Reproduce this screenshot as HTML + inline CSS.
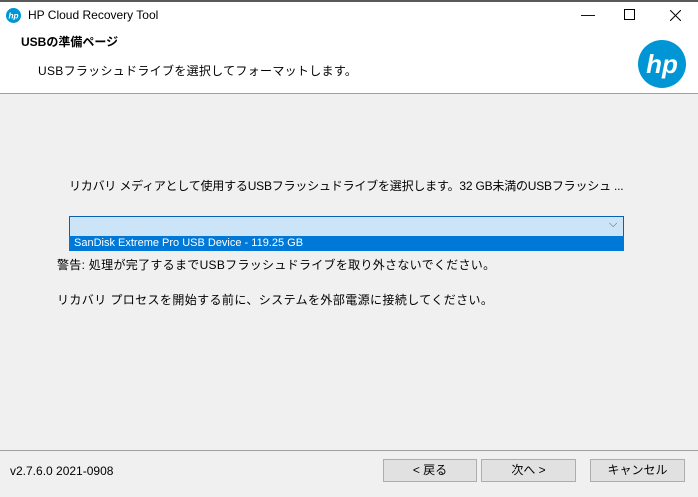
<html><head><style>
body{margin:0;width:698px;height:497px;background:#f0f0f0;position:relative;overflow:hidden;font-family:"Liberation Sans","Noto Sans CJK JP",sans-serif;font-size:12px;color:#000}
.a{position:absolute;white-space:nowrap}
.btn{position:absolute;top:459px;height:21px;border:1px solid #adadad;background:#e1e1e1;text-align:center;line-height:21px;font-size:12px}
</style></head><body>
<div class="a" style="left:0;top:0;width:698px;height:2px;background:#5a5a5a"></div>
<div class="a" style="left:0;top:2px;width:698px;height:91px;background:#fff"></div>
<div class="a" style="left:0;top:93px;width:698px;height:1px;background:#a0a0a0"></div>
<svg class="a" style="left:6px;top:8px" width="15" height="15" viewBox="0 0 20 20"><circle cx="10" cy="10" r="10" fill="#0096d6"/><text x="10" y="14" font-size="11" font-style="italic" font-weight="bold" fill="#fff" text-anchor="middle" font-family="Liberation Sans">hp</text></svg>
<div class="a" style="left:28px;top:8px;font-size:12px">HP Cloud Recovery Tool</div>
<div class="a" style="left:581px;top:6px;font-size:14px">—</div>
<div class="a" style="left:624px;top:9px;width:9px;height:9px;border:1px solid #000"></div>
<svg class="a" style="left:670px;top:10px" width="11" height="11"><path d="M0 0L11 11M11 0L0 11" stroke="#000" stroke-width="1"/></svg>
<div class="a" style="left:21px;top:33px;font-weight:bold">USBの準備ページ</div>
<div class="a" style="left:38px;top:62px;letter-spacing:0.3px">USBフラッシュドライブを選択してフォーマットします。</div>
<svg class="a" style="left:638px;top:40px" width="48" height="48" viewBox="0 0 48 48"><circle cx="24" cy="24" r="24" fill="#0096d6"/><text x="24" y="33" font-size="26" font-style="italic" font-weight="bold" fill="#fff" text-anchor="middle" font-family="Liberation Sans">hp</text></svg>
<div class="a" style="left:69px;top:177px;letter-spacing:-0.2px">リカバリ メディアとして使用するUSBフラッシュドライブを選択します。32 GB未満のUSBフラッシュ ...</div>
<div class="a" style="left:69px;top:216px;width:553px;height:19px;border:1px solid #0d5fb0;background:#cce4f7"></div>
<div class="a" style="left:609px;top:218px;color:#555;font-size:11px">⌵</div>
<div class="a" style="left:69px;top:236px;width:555px;height:15px;background:#0078d7;color:#fff;font-size:11px;line-height:15px"><span style="padding-left:5px">SanDisk Extreme Pro USB Device - 119.25 GB</span></div>
<div class="a" style="left:57px;top:256px;letter-spacing:0.3px">警告: 処理が完了するまでUSBフラッシュドライブを取り外さないでください。</div>
<div class="a" style="left:57px;top:291px;letter-spacing:0.4px">リカバリ プロセスを開始する前に、システムを外部電源に接続してください。</div>
<div class="a" style="left:0;top:450px;width:698px;height:1px;background:#a0a0a0"></div>
<div class="a" style="left:10px;top:464px">v2.7.6.0 2021-0908</div>
<div class="btn" style="left:383px;width:92px">&lt; 戻る</div>
<div class="btn" style="left:481px;width:93px">次へ &gt;</div>
<div class="btn" style="left:590px;width:93px">キャンセル</div>
</body></html>
